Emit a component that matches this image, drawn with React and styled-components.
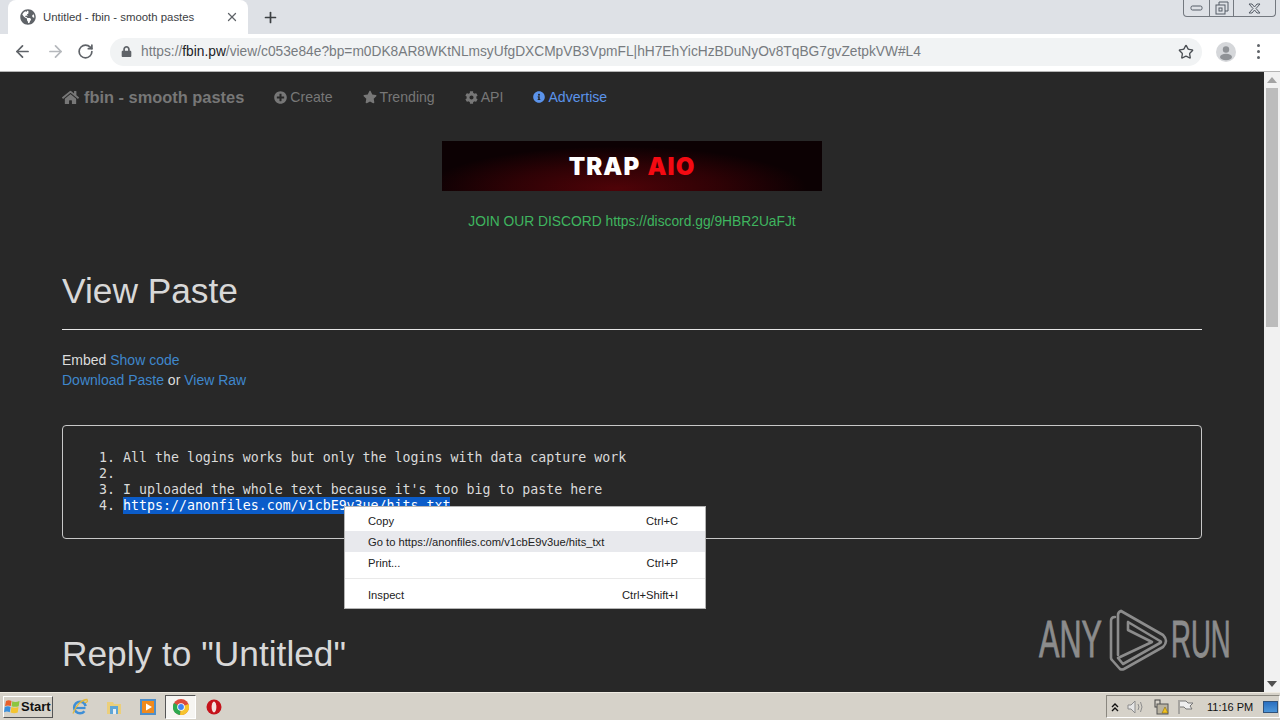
import React from "react";
import styled, { createGlobalStyle } from "styled-components";
import { FaHome, FaPlusCircle, FaStar, FaCog, FaInfoCircle, FaLock, FaGlobeAmericas } from "react-icons/fa";
import { ArrowLeft, ArrowRight, RotateCw, Star, X, Plus } from "lucide-react";

const Global = createGlobalStyle`
  html, body { margin: 0; padding: 0; width: 1280px; height: 720px; overflow: hidden; background: #282828; }
  body { font-family: "Liberation Sans", Arial, sans-serif; }
  * { box-sizing: border-box; }
`;

const Screen = styled.div`
  position: relative;
  width: 1280px;
  height: 720px;
  display: flex;
  flex-direction: column;
  overflow: hidden;
`;

const TabStrip = styled.div`
  height: 34px;
  background: #dee1e6;
  display: flex;
  align-items: flex-end;
  padding-left: 8px;
`;
const Tab = styled.div`
  width: 240px;
  height: 34px;
  background: #fff;
  border-radius: 8px 8px 0 0;
  display: flex;
  align-items: center;
  padding: 0 9px 0 12px;
  gap: 7px;
  color: #3c4043;
  svg { flex-shrink: 0; }
`;
const TabTitle = styled.span`
  flex: 1;
  min-width: 0;
  font-size: 11.4px;
  white-space: nowrap;
`;
const NewTab = styled.div`
  width: 20px;
  margin-left: 12px;
  height: 34px;
  display: flex;
  align-items: center;
  justify-content: center;
  color: #3c4043;
`;
const WindowControls = styled.div`
  margin-left: auto;
  margin-right: 4px;
  align-self: flex-start;
  display: flex;
  height: 17px;
  border: 1px solid #73787f;
  border-top: none;
  border-radius: 0 0 4px 4px;
`;
const WinButton = styled.div`
  width: ${(p) => p.$w}px;
  display: flex;
  align-items: center;
  justify-content: center;
  border-left: ${(p) => (p.$first ? "none" : "1px solid #73787f")};
`;

const Toolbar = styled.div`
  height: 38px;
  background: #fff;
  border-bottom: 1px solid #b5b5b5;
  display: flex;
  align-items: center;
  padding: 0 0 2px 13px;
`;
const NavIcon = styled.div`
  width: ${(p) => p.$w}px;
  display: flex;
  align-items: center;
  color: ${(p) => p.$color || "#5f6368"};
`;
const Omnibox = styled.div`
  width: 1092px;
  margin-left: 4px;
  height: 28px;
  border-radius: 14px;
  background: #f1f3f4;
  display: flex;
  align-items: center;
  padding: 0 8px 0 11px;
  color: #5f6368;
  svg { flex-shrink: 0; }
`;
const Url = styled.div`
  flex: 1;
  min-width: 0;
  margin-left: 9px;
  font-size: 13.76px;
  white-space: nowrap;
  color: #777b80;
  b { font-weight: normal; color: #202124; }
`;
const Avatar = styled.div`
  margin-left: 14px;
  width: 20px;
  height: 20px;
  border-radius: 50%;
  background: #d5d7da;
  overflow: hidden;
`;
const Kebab = styled.div`
  margin-left: 21px;
  display: flex;
  flex-direction: column;
  gap: 3px;
  i { width: 3px; height: 3px; border-radius: 50%; background: #5f6368; display: block; }
`;

const Body = styled.div`
  flex: 1;
  min-height: 0;
  display: flex;
`;
const Page = styled.main`
  width: 1264px;
  background: #282828;
  padding: 0 62px;
  overflow: hidden;
  color: #dcdcdc;
  font-size: 15px;
  line-height: 20px;
`;
const NavBar = styled.nav`
  height: 50px;
  display: flex;
  align-items: center;
`;
const Brand = styled.span`
  display: flex;
  align-items: center;
  gap: 5px;
  font-size: 16.4px;
  font-weight: bold;
  color: #777;
  margin-right: 30px;
`;
const NavLink = styled.span`
  display: flex;
  align-items: center;
  gap: 3px;
  font-size: 14.1px;
  color: ${(p) => (p.$active ? "#5b93ea" : "#777")};
  margin-right: 30px;
`;
const Banner = styled.div`
  width: 380px;
  height: 50px;
  margin: 19px auto 0;
  padding-top: 1px;
  background:
    radial-gradient(ellipse 190px 42px at 46% 95%, #4f0308 0%, rgba(58, 2, 6, 0.75) 55%, transparent 100%),
    #0c0103;
  display: flex;
  align-items: center;
  justify-content: center;
  gap: 7px;
  font-family: Inter, "Liberation Sans", sans-serif;
  font-weight: 900;
  font-size: 24px;
  letter-spacing: 1.1px;
  color: #fff;
  em { font-style: normal; color: #f40a12; }
`;
const Discord = styled.p`
  margin: 21px 0 0;
  text-align: center;
  font-size: 13.8px;
  color: #3fb55f;
`;
const Heading = styled.h1`
  margin: ${(p) => p.$top}px 0 0;
  font-size: 35.3px;
  line-height: 40px;
  font-weight: normal;
  color: #d8d8d8;
`;
const Rule = styled.hr`
  margin: 18px 0 20px;
  border: none;
  border-top: 1px solid #e6e6e6;
  height: 1px;
`;
const Line = styled.div`
  white-space: nowrap;
  font-size: 14px;
  a { color: #3f87cc; }
`;
const PasteBox = styled.div`
  margin-top: 35px;
  height: 114px;
  border: 1px solid #c8c8c8;
  border-radius: 4px;
  padding: 24px 0 0 0;
`;
const Code = styled.ol`
  margin: 0;
  padding: 0 0 0 60px;
  font-family: "DejaVu Sans Mono", monospace;
  font-size: 13.28px;
  line-height: 16px;
  color: #dadada;
  li { height: 16px; white-space: pre; }
`;
const Selected = styled.span`
  display: inline-block;
  background: #0b5cc9;
  box-shadow: 0 -1px 0 #0b5cc9;
  color: #fff;
  height: 16px;
`;

const Scrollbar = styled.div`
  width: 16px;
  background: #f1f1f1;
  display: flex;
  flex-direction: column;
  align-items: center;
`;
const ArrowBox = styled.div`
  height: 16px;
  margin-top: ${(p) => (p.$end ? "auto" : "0")};
  display: flex;
  align-items: center;
  justify-content: center;
  svg { display: block; }
`;
const Thumb = styled.div`
  width: 12px;
  height: 239px;
  background: #bcbcbc;
`;

const Menu = styled.div`
  position: absolute;
  left: 344px;
  top: 506px;
  width: 362px;
  height: 103px;
  background: #fff;
  border: 1px solid #b4b4b4;
  padding-top: 3px;
  font-size: 11.2px;
  color: #222;
`;
const MenuItem = styled.div`
  height: 21px;
  display: flex;
  align-items: center;
  justify-content: space-between;
  padding: 0 27px 0 23px;
  background: ${(p) => (p.$hover ? "#e8e9ed" : "transparent")};
`;
const MenuSep = styled.div`
  height: 1px;
  background: #e9e9e9;
  margin: 5px 0;
`;

const Watermark = styled.div`
  position: absolute;
  left: 1039px;
  top: 608px;
  display: flex;
  align-items: center;
  color: #8c8c8c;
  font-size: 51px;
  line-height: 62px;
  -webkit-text-stroke: 0.9px #8c8c8c;
`;
const WatermarkWord = styled.span`
  display: inline-block;
  transform: scaleX(${(p) => p.$sx});
  transform-origin: left center;
  width: ${(p) => p.$w}px;
  white-space: nowrap;
`;
const MarkSlot = styled.div`
  width: 60px;
  height: 64px;
  margin: 0 3px 0 6px;
`;

const Taskbar = styled.footer`
  height: 28px;
  background: #d6d2c9;
  border-top: 1px solid #efebe2;
  display: flex;
  align-items: center;
  padding-left: 3px;
`;
const StartButton = styled.div`
  width: 50px;
  height: 22px;
  background: #d6d2c9;
  border: 1px solid;
  border-color: #fff #555 #555 #fff;
  display: flex;
  align-items: center;
  gap: 1px;
  font-size: 13px;
  font-weight: bold;
  color: #111;
`;
const TaskIcons = styled.div`
  display: flex;
  align-items: center;
  margin-left: 10px;
  height: 100%;
`;
const TaskIcon = styled.div`
  width: ${(p) => (p.$active ? 31 : 34)}px;
  height: 24px;
  display: flex;
  align-items: center;
  justify-content: center;
  margin-right: ${(p) => (p.$active ? 1 : 0)}px;
  ${(p) => p.$active && "background:#f6f5f2;border:1px solid;border-color:#555 #fff #fff #555;"}
`;
const Tray = styled.div`
  margin-left: auto;
  width: 174px;
  height: 23px;
  border: 1px solid;
  border-color: #8a877f #fff #fff #8a877f;
  display: flex;
  align-items: center;
  padding-left: 3px;
  gap: 7px;
  color: #111;
  svg { flex-shrink: 0; }
`;
const Clock = styled.span`
  font-size: 11px;
  margin-left: 6px;
  white-space: nowrap;
`;
const ShowDesktop = styled.div`
  width: 15px;
  height: 12px;
  margin-left: 3px;
  flex-shrink: 0;
  background: linear-gradient(#2a6fc0, #4d96d8);
  border: 1px solid #30527a;
`;

const WindowsFlag = () => (
  <svg width="16" height="16" viewBox="0 0 16 16">
    <path d="M2 2 Q4.500 0.500 7.500 2 L6.800 7 Q4 5.800 1 7Z" fill="#e8602a" />
    <path d="M8.300 2.200 Q11 3.800 15.500 2 L14.700 7.200 Q11 8.500 7.600 7.200Z" fill="#8cc63f" />
    <path d="M0.800 7.900 Q4 6.700 6.600 7.900 L5.800 13.200 Q3 12 0 13.200Z" fill="#3a8fdc" />
    <path d="M7.400 8 Q11 9.400 14.500 8 L13.700 13.500 Q10 14.800 6.600 13.400Z" fill="#f4c430" />
  </svg>
);
const IEIcon = () => (
  <svg width="18" height="18" viewBox="0 0 18 18" fill="none">
    <circle cx="9" cy="9.500" r="5.800" stroke="#3f8fd6" strokeWidth="2.600" strokeDasharray="30 6" strokeDashoffset="-4" />
    <path d="M3.500 10h11" stroke="#3f8fd6" strokeWidth="2.200" />
    <path d="M2 15.500 C5 7 11 1.500 16 1.500 C17.500 4 15 5 13.500 4" stroke="#e3b93d" strokeWidth="1.300" />
  </svg>
);
const FolderIcon = () => (
  <svg width="18" height="18" viewBox="0 0 18 18">
    <path d="M2 4h6l1 2h7v10H2z" fill="#eccf7a" />
    <path d="M5 8h8v8H5z" fill="#5fa6d6" />
    <path d="M8 11h3v5H8z" fill="#e8eef3" />
  </svg>
);
const MediaIcon = () => (
  <svg width="18" height="18" viewBox="0 0 18 18">
    <rect x="1" y="1" width="16" height="16" fill="#4f8fc9" />
    <rect x="3" y="3" width="12" height="12" fill="#f08a1d" />
    <path d="M7 5.500 L13 9 L7 12.500Z" fill="#fff" />
  </svg>
);
const ChromeIcon = () => (
  <svg width="16" height="16" viewBox="0 0 16 16">
    <circle cx="8" cy="8" r="8" fill="#dd4b3d" />
    <path d="M8 8 L1 4 A8 8 0 0 0 7 16Z" fill="#2da94f" />
    <path d="M8 8 L15.500 5 A8 8 0 0 1 7 16Z" fill="#f6c42d" />
    <circle cx="8" cy="8" r="3.800" fill="#fff" />
    <circle cx="8" cy="8" r="2.900" fill="#4285f4" />
  </svg>
);
const OperaIcon = () => (
  <svg width="16" height="16" viewBox="0 0 16 16">
    <circle cx="8" cy="8" r="7.500" fill="#c5131b" />
    <ellipse cx="8" cy="8" rx="2.400" ry="5.400" fill="#f4e4e0" />
  </svg>
);
const PlayMark = () => (
  <svg width="60" height="64" viewBox="0 0 60 64" fill="none" stroke="#8c8c8c" strokeWidth="2.600" strokeLinejoin="round" strokeLinecap="round">
    <path d="M13 3 L55 27 Q58 30 58 33 Q58 36 55 39 L16 61 Q14 62 12 61 L4 52 Q3 51 3 50 V13 Q3 9 7 9" />
    <path d="M13 3 Q10 4 10 7 V47" />
    <path d="M20 14 V22 L44 34 L10 50 L15 56 L52 35 Q54 34 52 33 L20 14" />
  </svg>
);

const lines = [
  "All the logins works but only the logins with data capture work",
  " ",
  "I uploaded the whole text because it's too big to paste here",
];

export default function App() {
  return (
    <Screen>
      <Global />
      <TabStrip>
        <Tab>
          <FaGlobeAmericas size={16} color="#5f6368" />
          <TabTitle>Untitled - fbin - smooth pastes</TabTitle>
          <X size={14} strokeWidth={2.2} color="#5f6368" />
        </Tab>
        <NewTab>
          <Plus size={17} strokeWidth={2.4} />
        </NewTab>
        <WindowControls>
          <WinButton $first $w={25}>
            <svg width="13" height="6" viewBox="0 0 13 6" fill="none" stroke="#555c66"><rect x="1" y="1" width="11" height="4" rx="1.500" /></svg>
          </WinButton>
          <WinButton $w={24}>
            <svg width="14" height="14" viewBox="0 0 14 14" fill="none" stroke="#555c66"><path d="M4 4V1h9v9h-3" /><rect x="1" y="4" width="9" height="9" /><rect x="4" y="7" width="3" height="3" /></svg>
          </WinButton>
          <WinButton $w={42}>
            <svg width="13" height="11" viewBox="0 0 13 11" fill="none" stroke="#555c66"><path d="M1 1h3l2.500 3L9 1h3L8 5.500l4 4.500H9L6.500 7 4 10H1l4-4.500z" /></svg>
          </WinButton>
        </WindowControls>
      </TabStrip>
      <Toolbar>
        <NavIcon $w={33}><ArrowLeft size={19} strokeWidth={2.2} /></NavIcon>
        <NavIcon $w={31} $color="#b5b8bc"><ArrowRight size={19} strokeWidth={2.2} /></NavIcon>
        <NavIcon $w={29}><RotateCw size={17} strokeWidth={2.4} /></NavIcon>
        <Omnibox>
          <FaLock size={11} />
          <Url>https://<b>fbin.pw</b>/view/c053e84e?bp=m0DK8AR8WKtNLmsyUfgDXCMpVB3VpmFL|hH7EhYicHzBDuNyOv8TqBG7gvZetpkVW#L4</Url>
          <Star size={16} strokeWidth={2} color="#4b4f54" />
        </Omnibox>
        <Avatar>
          <svg width="20" height="20" viewBox="0 0 20 20"><circle cx="10" cy="7.500" r="3.200" fill="#8f9296" /><ellipse cx="10" cy="15" rx="6" ry="3.200" fill="#8f9296" /></svg>
        </Avatar>
        <Kebab><i /><i /><i /></Kebab>
      </Toolbar>
      <Body>
        <Page>
          <NavBar>
            <Brand><FaHome size={17} />fbin - smooth pastes</Brand>
            <NavLink><FaPlusCircle size={13} />Create</NavLink>
            <NavLink><FaStar size={14} />Trending</NavLink>
            <NavLink><FaCog size={13} />API</NavLink>
            <NavLink $active><FaInfoCircle size={12} />Advertise</NavLink>
          </NavBar>
          <Banner>TRAP <em>AIO</em></Banner>
          <Discord>JOIN OUR DISCORD https://discord.gg/9HBR2UaFJt</Discord>
          <Heading $top={39}>View Paste</Heading>
          <Rule />
          <Line>Embed <a>Show code</a></Line>
          <Line><a>Download Paste</a> or <a>View Raw</a></Line>
          <PasteBox>
            <Code>
              {lines.map((l, i) => <li key={i}>{l}</li>)}
              <li><Selected>https://anonfiles.com/v1cbE9v3ue/hits_txt</Selected></li>
            </Code>
          </PasteBox>
          <Heading $top={95}>Reply to "Untitled"</Heading>
        </Page>
        <Scrollbar>
          <ArrowBox><svg width="10" height="6" viewBox="0 0 10 6"><path d="M5 0l5 6H0z" fill="#a3a3a3" /></svg></ArrowBox>
          <Thumb />
          <ArrowBox $end><svg width="10" height="6" viewBox="0 0 10 6"><path d="M0 0h10L5 6z" fill="#505050" /></svg></ArrowBox>
        </Scrollbar>
      </Body>
      <Taskbar>
        <StartButton><WindowsFlag />Start</StartButton>
        <TaskIcons>
          <TaskIcon><IEIcon /></TaskIcon>
          <TaskIcon><FolderIcon /></TaskIcon>
          <TaskIcon><MediaIcon /></TaskIcon>
          <TaskIcon $active><ChromeIcon /></TaskIcon>
          <TaskIcon><OperaIcon /></TaskIcon>
        </TaskIcons>
        <Tray>
          <svg width="10" height="10" viewBox="0 0 10 10" fill="none" stroke="#111" strokeWidth="1.400"><path d="M2 5l3-3 3 3M2 9l3-3 3 3" /></svg>
          <svg width="18" height="16" viewBox="0 0 18 16" fill="none" stroke="#8d8d8d"><path d="M1 6h3l4-4v12l-4-4H1z" fill="#e6e6e6" /><path d="M11 5q2 3 0 6M13.500 3q3 5 0 10" /></svg>
          <svg width="18" height="18" viewBox="0 0 18 18"><rect x="3" y="2" width="5" height="7" fill="none" stroke="#444" /><rect x="5" y="6" width="11" height="10" fill="#b9b3a2" stroke="#555" /><path d="M10 15l3-6 3 6z" fill="#f3c31f" stroke="#7a5f00" strokeWidth=".5" /></svg>
          <svg width="17" height="16" viewBox="0 0 17 16" fill="none" stroke="#777"><path d="M2 1v14" /><path d="M3 2h6l2 2h5l-3 3 2 3H9L7 8H3" fill="#eee" /></svg>
          <Clock>11:16 PM</Clock>
          <ShowDesktop />
        </Tray>
      </Taskbar>
      <Menu>
        <MenuItem><span>Copy</span><span>Ctrl+C</span></MenuItem>
        <MenuItem $hover><span>Go to https://anonfiles.com/v1cbE9v3ue/hits_txt</span></MenuItem>
        <MenuItem><span>Print...</span><span>Ctrl+P</span></MenuItem>
        <MenuSep />
        <MenuItem><span>Inspect</span><span>Ctrl+Shift+I</span></MenuItem>
      </Menu>
      <Watermark>
        <WatermarkWord $sx={0.6} $w={63}>ANY</WatermarkWord>
        <MarkSlot><PlayMark /></MarkSlot>
        <WatermarkWord $sx={0.54} $w={60}>RUN</WatermarkWord>
      </Watermark>
    </Screen>
  );
}
